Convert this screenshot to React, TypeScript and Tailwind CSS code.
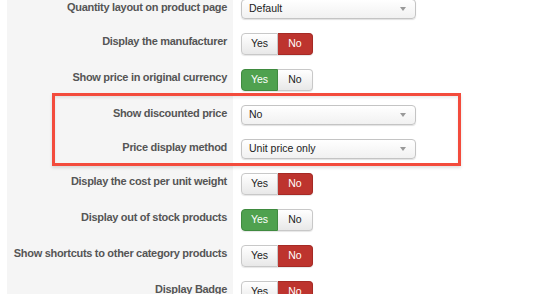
import React from 'react'

type Row =
  | { label: string; h: string; kind: 'select'; value: string }
  | { label: string; h: string; kind: 'toggle'; on: boolean }

const rows: Row[] = [
  { label: 'Quantity layout on product page', h: 'h-[34px]', kind: 'select', value: 'Default' },
  { label: 'Display the manufacturer', h: 'h-[36px]', kind: 'toggle', on: false },
  { label: 'Show price in original currency', h: 'h-[36px]', kind: 'toggle', on: true },
  { label: 'Show discounted price', h: 'h-[34px]', kind: 'select', value: 'No' },
  { label: 'Price display method', h: 'h-[34px]', kind: 'select', value: 'Unit price only' },
  { label: 'Display the cost per unit weight', h: 'h-[36px]', kind: 'toggle', on: false },
  { label: 'Display out of stock products', h: 'h-[36px]', kind: 'toggle', on: true },
  { label: 'Show shortcuts to other category products', h: 'h-[36px]', kind: 'toggle', on: false },
  { label: 'Display Badge', h: 'h-[36px]', kind: 'toggle', on: false },
]

const Select = ({ value }: { value: string }) => (
  <div className="w-[175px] h-[20px] flex items-center justify-between pl-[7px] pr-[9px] rounded-[4px] border border-[#c4c4c4] bg-gradient-to-b from-white to-[#f1f1f1] shadow-[0_1px_1px_rgba(0,0,0,0.12)] text-[10.5px] text-[#222]">
    <span>{value}</span>
    <svg width="6" height="4" viewBox="0 0 6 4">
      <path d="M0 0h6L3 4z" fill="#999" />
    </svg>
  </div>
)

const Toggle = ({ on }: { on: boolean }) => (
  <div className="flex h-[22px] text-[10.5px] shadow-[0_1px_1px_rgba(0,0,0,0.1)] rounded-[4px]">
    <div
      className={
        on
          ? 'w-[37px] flex items-center justify-center rounded-l-[4px] bg-[#4fa14f] border border-[#3f8a3f] text-white'
          : 'w-[37px] flex items-center justify-center rounded-l-[4px] bg-gradient-to-b from-white to-[#e8e8e8] border border-[#c8c8c8] text-[#222]'
      }
    >
      Yes
    </div>
    <div
      className={
        on
          ? 'w-[35px] flex items-center justify-center rounded-r-[4px] bg-gradient-to-b from-white to-[#e8e8e8] border border-l-0 border-[#c8c8c8] text-[#222]'
          : 'w-[35px] flex items-center justify-center rounded-r-[4px] bg-[#bd342e] border border-l-0 border-[#a52a25] text-white'
      }
    >
      No
    </div>
  </div>
)

export default function App() {
  return (
    <div className="relative w-[557px] h-[294px] overflow-hidden bg-white" style={{ fontFamily: '"Liberation Sans", Arial, sans-serif' }}>
      <div className="flex flex-col mt-[-1px]">
        {rows.map((r) => (
          <div key={r.label} className={`flex items-start ${r.h}`}>
            <div className="ml-[7px] w-[226px] h-full bg-[#f5f5f5] pr-[6px] pt-[1px] text-right text-[11px] tracking-[-0.3px] leading-[15px] font-bold text-[#555] whitespace-nowrap">
              {r.label}
            </div>
            <div className="pl-[8px]">
              {r.kind === 'select' ? <Select value={r.value} /> : <Toggle on={r.on} />}
            </div>
          </div>
        ))}
      </div>
      <div className="absolute left-[52px] top-[93px] w-[409px] h-[73px] border-[3.5px] border-[#f34b3c] shadow-[0_2px_3px_rgba(0,0,0,0.12),inset_0_2px_3px_rgba(0,0,0,0.08)]" />
    </div>
  )
}
